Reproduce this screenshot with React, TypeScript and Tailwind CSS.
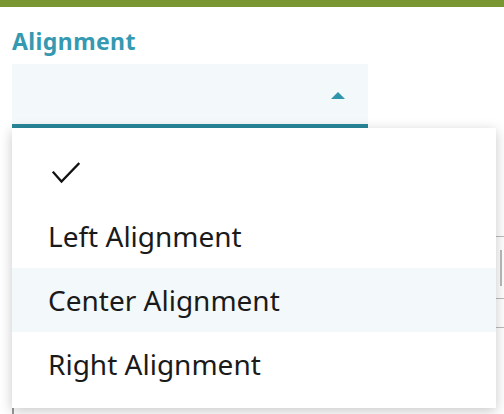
import { useState } from "react";

const OPTIONS = ["", "Left Alignment", "Center Alignment", "Right Alignment"];

function CheckMark() {
  return (
    <svg width="28" height="22" viewBox="0 0 28 22" fill="none">
      <polyline
        points="1.5,10.5 9.5,19.5 26.5,2"
        stroke="#111"
        strokeWidth="2.3"
        strokeLinecap="square"
      />
    </svg>
  );
}

export default function App() {
  const [hovered, setHovered] = useState(2);

  return (
    <div className="relative min-h-screen overflow-hidden bg-white font-['Noto_Sans',sans-serif]">
      <div className="h-[7px] bg-[#7a9632]" />

      <div className="px-3 pt-[19px]">
        <label className="block text-[23px] leading-[31px] font-bold tracking-[0.4px] text-[#3499b1]">
          Alignment
        </label>
        {/* Select trigger */}
        <div className="mt-[7px] flex h-16 w-[356px] items-center justify-end border-b-4 border-[#28889a] bg-[#f3f8fb] pr-[23px] pt-[2px]">
          <span className="h-0 w-0 border-x-[7px] border-b-[7px] border-x-transparent border-b-[#2f95ab]" />
        </div>
      </div>

      {/* Page content behind the menu */}
      <div className="ml-[400px] mt-[108px] h-[63px] border-y border-[#bbb]">
        <div className="ml-[100px] mt-[13px] h-9 w-[2px] bg-[#bbb]" />
      </div>
      <div className="ml-[400px] h-[29px] border-b border-[#bbb]" />
      <div className="ml-3 mt-[79px] h-5 border-l-2 border-[#999]" />

      {/* Dropdown menu */}
      <ul className="absolute left-3 top-[128px] w-[484px] bg-white py-3 shadow-[0_3px_12px_rgba(0,0,0,0.22)]">
        {OPTIONS.map((opt, i) => (
          <li
            key={i}
            onMouseEnter={() => setHovered(i)}
            className={`flex h-16 items-center pl-[36px] text-[28px] text-[#1a1a1a] ${
              hovered === i ? "bg-[#f3f8fb]" : "bg-white"
            }`}
          >
            {opt === "" ? (
              <span className="ml-[4px] mt-[1px]">
                <CheckMark />
              </span>
            ) : (
              opt
            )}
          </li>
        ))}
      </ul>
    </div>
  );
}
